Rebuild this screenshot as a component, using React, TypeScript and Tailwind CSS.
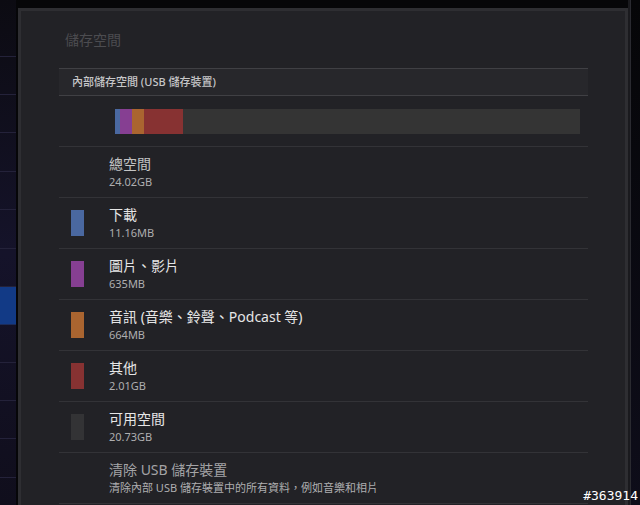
import type React from "react";

const cjk = { fontFamily: '"Noto Sans", "Noto Sans CJK TC", sans-serif' };

interface Row {
	title: string;
	sub: string;
	swatch?: string;
	tone?: "dim" | "bright" | "muted";
}

const rows: Row[] = [
	{ title: "總空間", sub: "24.02GB", tone: "dim" },
	{ title: "下載", sub: "11.16MB", swatch: "bg-[#4a68a0]" },
	{ title: "圖片、影片", sub: "635MB", swatch: "bg-[#863f92]" },
	{ title: "音訊 (音樂、鈴聲、Podcast 等)", sub: "664MB", swatch: "bg-[#aa6530]" },
	{ title: "其他", sub: "2.01GB", swatch: "bg-[#873232]" },
	{ title: "可用空間", sub: "20.73GB", swatch: "bg-[#333335]" },
	{ title: "清除 USB 儲存裝置", sub: "清除內部 USB 儲存裝置中的所有資料，例如音樂和相片", tone: "muted" },
];

const SideStrip: React.FC = () => {
	// heights of the tabs on the left, measured from the shot
	const items = [57, 38, 38, 39, 38, 39, 38, 38, 38, 38, 38, 39, 38];
	return (
		<div className="w-[16px] flex flex-col bg-gradient-to-b from-[#0c0b12] via-[#15132a] to-[#100e1c]">
			{items.map((h, i) => (
				<div
					key={i}
					style={{ height: h }}
					className={
						i === 7
							? "shrink-0 bg-[#123a86] border-b border-[#1c2c5a]"
							: "shrink-0 border-b border-[#24223a]"
					}
				/>
			))}
		</div>
	);
};

const ListRow: React.FC<{ row: Row }> = ({ row }) => {
	const titleColor =
		row.tone === "dim" ? "text-[#c4c4c4]" : row.tone === "muted" ? "text-[#a4a4a6]" : "text-[#e6e6e6]";
	return (
		<div className="h-[51px] flex items-center border-b border-[#333337]">
			<div className="w-[50px] flex justify-start pl-[12px]">
				{row.swatch && <div className={`w-[13px] h-[26px] ${row.swatch}`} />}
			</div>
			<div className="flex flex-col gap-[2px]">
				<div className={`text-[14px] leading-[18px] ${titleColor}`}>{row.title}</div>
				<div className="text-[11px] leading-[14px] text-[#aeaeb0]">{row.sub}</div>
			</div>
		</div>
	);
};

export default function App() {
	return (
		<div className="relative w-[640px] h-[505px] overflow-hidden bg-[#060608] flex" style={cjk}>
			<SideStrip />
			<div className="w-[2px]" />
			<div className="w-[610px] mt-[8px] border-t-[3px] border-l-[3px] border-r-[3px] border-[#2e2e32] bg-[#222226] flex flex-col pl-[38px] pr-[37px]">
				<div className="h-[57px] flex items-center pl-[6px] text-[14px] text-[#4c4c50]">儲存空間</div>
				<div className="h-[28px] flex items-center pl-[13px] bg-[#27272b] border-t border-b border-[#404044] text-[11px] font-medium text-[#c6c6c8]">
					內部儲存空間 (USB 儲存裝置)
				</div>
				<div className="h-[51px] flex items-center pl-[56px] pr-[8px] border-b border-[#333337]">
					<div className="flex-1 h-[25px] flex bg-[#343434]">
						<div className="w-[5px] bg-[#4a68a0]" />
						<div className="w-[12px] bg-[#863f92]" />
						<div className="w-[12px] bg-[#aa6530]" />
						<div className="w-[39px] bg-[#873232]" />
					</div>
				</div>
				{rows.map((r) => (
					<ListRow key={r.title} row={r} />
				))}
			</div>
			<div className="w-[12px] flex">
				<div className="w-[2px] bg-[#1a1a1e]" />
				<div className="w-[1px] bg-[#2a2a30]" />
				<div className="flex-1 bg-gradient-to-b from-[#060608] to-[#0e0d1a]" />
			</div>
			<div
				className="absolute right-[2px] bottom-[1px] text-[13px] leading-[16px] text-white"
				style={{ fontFamily: '"DejaVu Sans Mono", monospace' }}
			>
				#363914
			</div>
		</div>
	);
}
